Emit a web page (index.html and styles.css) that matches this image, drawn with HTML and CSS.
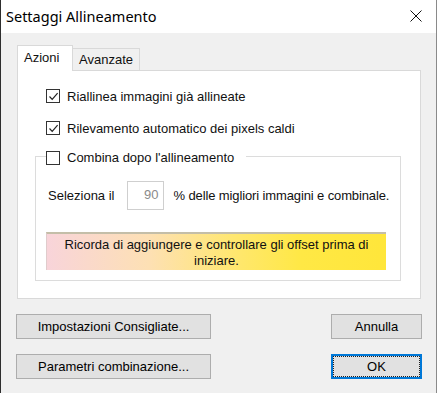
FILE: index.html
```html
<!DOCTYPE html>
<html lang="it">
<head>
    <meta charset="UTF-8">
    <meta name="viewport" content="width=device-width, initial-scale=1.0">
    <title>Settaggi Allineamento</title>
    <link rel="stylesheet" href="styles.css">
</head>
<body>
    <div class="window">
        <div class="titlebar">
            <span class="title">Settaggi Allineamento</span>
            <svg class="close" width="12" height="12" viewBox="0 0 12 12">
                <path d="M0.5 0.5 L11.5 11.5 M11.5 0.5 L0.5 11.5" stroke="#111" stroke-width="1" fill="none"/>
            </svg>
        </div>

        <div class="client">
            <div class="tabs">
                <div class="tab active">Azioni</div>
                <div class="tab">Avanzate</div>
            </div>

            <div class="panel">
                <div class="check-row">
                    <span class="box"><svg width="11" height="11" viewBox="0 0 11 11"><path d="M1.5 5.5 L4.2 8.3 L9.6 2.2" stroke="#222" stroke-width="1.2" fill="none"/></svg></span>
                    <span>Riallinea immagini già allineate</span>
                </div>
                <div class="check-row">
                    <span class="box"><svg width="11" height="11" viewBox="0 0 11 11"><path d="M1.5 5.5 L4.2 8.3 L9.6 2.2" stroke="#222" stroke-width="1.2" fill="none"/></svg></span>
                    <span>Rilevamento automatico dei pixels caldi</span>
                </div>

                <fieldset class="group">
                    <legend class="group-title">
                        <span class="box"></span>
                        <span>Combina dopo l'allineamento</span>
                    </legend>
                    <div class="select-row">
                        <span>Seleziona il</span>
                        <span class="num-input">90</span>
                        <span class="tight">% delle migliori immagini e combinale.</span>
                    </div>
                    <div class="note">Ricorda di aggiungere e controllare gli offset prima di<br>iniziare.</div>
                </fieldset>
            </div>

            <div class="buttons">
                <div class="btn-row">
                    <button class="btn wide">Impostazioni Consigliate...</button>
                    <button class="btn">Annulla</button>
                </div>
                <div class="btn-row">
                    <button class="btn wide">Parametri combinazione...</button>
                    <button class="btn default">OK</button>
                </div>
            </div>
        </div>
    </div>
</body>
</html>
```

FILE: styles.css
```css
* {
    box-sizing: border-box;
}

body {
    margin: 0;
    font-family: "Liberation Sans", Arial, sans-serif;
    font-size: 13px;
    color: #111;
    background-color: #f0f0f0;
}

.window {
    width: 437px;
    height: 393px;
    display: flex;
    flex-direction: column;
    border-left: 1px solid #2e2e2e;
    border-right: 1px solid #8a8a8a;
    background-color: #f0f0f0;
}

.titlebar {
    height: 33px;
    flex-shrink: 0;
    display: flex;
    align-items: center;
    justify-content: space-between;
    padding: 0 14px 0 5px;
    background-color: #fff;
}

.title {
    font-family: "Noto Sans", "Open Sans", sans-serif;
    font-size: 14.5px;
    color: #000;
    margin-top: -1px;
}

.close {
    display: block;
    margin-top: -2px;
}

.client {
    flex: 1;
    padding: 12px 15px 0 16px;
}

/* tab strip */
.tabs {
    display: flex;
    align-items: flex-end;
    height: 25px;
}

.tab {
    height: 22px;
    padding: 0 0 0 6px;
    line-height: 21px;
    border: 1px solid #d9d9d9;
    border-bottom: none;
    background-color: #f0f0f0;
    width: 68px;
    margin-left: -1px;
}

.tab.active {
    position: relative;
    z-index: 1;
    height: 26px;
    width: 56px;
    margin-left: 0;
    margin-bottom: -1px;
    line-height: 24px;
    background-color: #fff;
}

.panel {
    height: 229px;
    border: 1px solid #d9d9d9;
    background-color: #fff;
    padding: 9px 19px 0 17px;
}

.check-row {
    height: 32px;
    display: flex;
    align-items: center;
    gap: 7px;
    padding-left: 11px;
}

.box {
    width: 14px;
    height: 14px;
    flex-shrink: 0;
    border: 1px solid #333;
    background-color: #fff;
    display: flex;
    align-items: center;
    justify-content: center;
}

.box svg {
    display: block;
}

/* group box */
.group {
    margin: 1px 0 0 0;
    padding: 0 0 10px 10px;
    border: 1px solid #dcdcdc;
    min-width: 0;
}

.group-title {
    display: flex;
    align-items: center;
    gap: 7px;
    padding: 5px 12px 3px 0;
}

.select-row {
    display: flex;
    align-items: center;
    margin-top: 13px;
    padding-left: 2px;
}

.tight {
    letter-spacing: -0.12px;
}

.num-input {
    width: 37px;
    height: 29px;
    margin: 0 10px 0 12px;
    border: 1px solid #cfcfcf;
    color: #8a8a8a;
    text-align: right;
    padding: 5px 4px 0 0;
    line-height: 16px;
}

.note {
    width: 340px;
    height: 38px;
    margin-top: 22px;
    padding-top: 3px;
    text-align: center;
    line-height: 16px;
    border-top: 2px solid #c4bea8;
    border-left: 1px solid #e0cccc;
    background: linear-gradient(to right, #f8d4da 0%, #fde0b4 30%, #ffe770 55%, #ffe845 75%, #ffe63a 100%);
}

/* dialog buttons */
.buttons {
    margin: 15px -1px 0 -1px;
    display: flex;
    flex-direction: column;
    gap: 15px;
}

.btn-row {
    display: flex;
    justify-content: space-between;
}

.btn {
    height: 25px;
    width: 91px;
    padding: 0;
    font-family: "Liberation Sans", Arial, sans-serif;
    font-size: 13px;
    color: #000;
    background-color: #e1e1e1;
    border: 1px solid #adadad;
}

.btn.wide {
    width: 195px;
}

.btn.default {
    border: 2px solid #0078d7;
    outline: 1px dotted #222;
    outline-offset: -3px;
}
```
